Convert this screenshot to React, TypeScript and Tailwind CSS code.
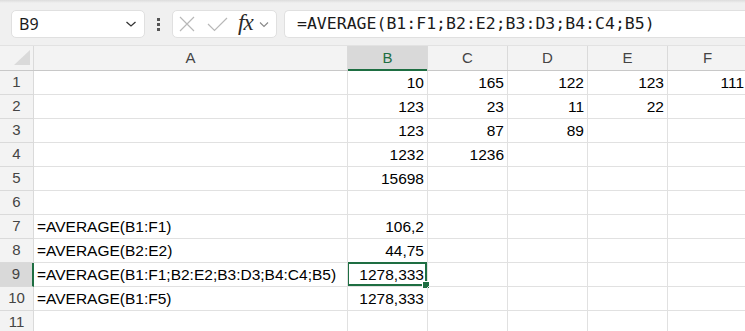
import React from "react";

const cols = ["A", "B", "C", "D", "E", "F"];
const colW = ["w-[314px]", "w-[80px]", "w-[80px]", "w-[80px]", "w-[80px]", "w-[80px]"];

const data: Record<number, string[]> = {
  1: ["", "10", "165", "122", "123", "111"],
  2: ["", "123", "23", "11", "22", ""],
  3: ["", "123", "87", "89", "", ""],
  4: ["", "1232", "1236", "", "", ""],
  5: ["", "15698", "", "", "", ""],
  6: ["", "", "", "", "", ""],
  7: ["=AVERAGE(B1:F1)", "106,2", "", "", "", ""],
  8: ["=AVERAGE(B2:E2)", "44,75", "", "", "", ""],
  9: ["=AVERAGE(B1:F1;B2:E2;B3:D3;B4:C4;B5)", "1278,333", "", "", "", ""],
  10: ["=AVERAGE(B1:F5)", "1278,333", "", "", "", ""],
  11: ["", "", "", "", "", ""],
};

export default function App() {
  const rows = [1, 2, 3, 4, 5, 6, 7, 8, 9, 10, 11];
  return (
    <div
      className="w-[745px] h-[331px] overflow-hidden bg-white relative"
      style={{ fontFamily: '"Liberation Sans", Arial, sans-serif' }}
    >
      {/* Toolbar */}
      <div className="h-[46px] bg-[#f0f0f0] relative border-b border-[#e2e2e2]">
        <div className="absolute top-0 left-0 right-0 h-[3px] bg-gradient-to-b from-[#dcdcdc] to-[#f0f0f0]" />
        <div className="flex items-center pt-[10px] pl-[11px] gap-0">
          {/* Name box */}
          <div className="w-[134px] h-[28px] bg-white rounded-[5px] border border-[#e0e0e0] flex items-center justify-between pl-[7px] pr-[7px]">
            <span className="text-[16px] text-[#1a1a1a]" style={{ fontFamily: '"Noto Sans", "Liberation Sans", sans-serif' }}>B9</span>
            <svg width="12" height="8" viewBox="0 0 12 8">
              <path d="M1.5 2 L6 6 L10.5 2" fill="none" stroke="#333" strokeWidth="1.3" />
            </svg>
          </div>
          {/* dots */}
          <div className="w-[27px] flex flex-col items-center gap-[2px]">
            <div className="w-[3px] h-[3px] bg-[#555]" />
            <div className="w-[3px] h-[3px] bg-[#555]" />
            <div className="w-[3px] h-[3px] bg-[#555]" />
          </div>
          {/* formula buttons */}
          <div className="w-[105px] h-[28px] bg-white rounded-[5px] border border-[#e0e0e0] flex items-center pl-[6px]">
            <svg width="16" height="16" viewBox="0 0 16 16">
              <path d="M1 1 L15 15 M15 1 L1 15" stroke="#b8b8b8" strokeWidth="1.2" fill="none" />
            </svg>
            <svg width="21" height="16" viewBox="0 0 21 16" className="ml-[12px]">
              <path d="M1 8 L7.5 14.5 L20 2" stroke="#b8b8b8" strokeWidth="1.2" fill="none" />
            </svg>
            <span
              className="ml-[10px] text-[23px] italic text-[#2a2a2a] leading-none -mt-[3px] tracking-[-1px]"
              style={{ fontFamily: '"Liberation Serif", "Times New Roman", serif' }}
            >
              fx
            </span>
            <svg width="10" height="7" viewBox="0 0 10 7" className="ml-[6px] mt-[1px]">
              <path d="M1 1.5 L5 5.5 L9 1.5" fill="none" stroke="#888" strokeWidth="1.1" />
            </svg>
          </div>
          {/* formula bar */}
          <div className="ml-[7px] flex-1 h-[28px] bg-white rounded-l-[5px] border border-r-0 border-[#e0e0e0] flex items-center pl-[12px] -mr-[10px]">
            <span
              className="text-[16.5px] text-[#1a1a1a] whitespace-nowrap"
              style={{ fontFamily: '"DejaVu Sans Mono", "Liberation Mono", monospace' }}
            >
              =AVERAGE(B1:F1;B2:E2;B3:D3;B4:C4;B5)
            </span>
          </div>
        </div>
      </div>

      {/* Column headers */}
      <div className="flex h-[25px] bg-[#f3f3f3] border-b border-[#c8c8c8] whitespace-nowrap">
        <div className="w-[34px] shrink-0 border-r border-[#dadada] relative">
          <svg width="17" height="16" viewBox="0 0 17 16" className="absolute left-[14px] top-[4px]">
            <polygon points="16,0 16,15 0,15" fill="#dadada" />
          </svg>
        </div>
        {cols.map((c, i) => (
          <div
            key={c}
            className={`${colW[i]} shrink-0 border-r border-[#dadada] flex items-center justify-center text-[15px] relative ${
              c === "B" ? "bg-[#d9d9d9] text-[#1e6e42]" : "text-[#444]"
            }`}
          >
            {c}
            {c === "B" && <div className="absolute left-0 right-0 bottom-[-1px] h-[2px] bg-[#1e6e42]" />}
          </div>
        ))}
      </div>

      {/* Rows */}
      {rows.map((r) => (
        <div key={r} className="flex h-[24px] whitespace-nowrap">
          <div
            className={`w-[34px] shrink-0 border-b border-r flex items-center justify-center text-[15px] text-[#444] relative ${
              r === 9 ? "bg-[#d9d9d9] border-b-[#dadada] border-r-[#1e6e42] border-r-2" : "bg-[#f3f3f3] border-[#dadada]"
            }`}
          >
            {r}
          </div>
          {data[r].map((v, i) => (
            <div
              key={i}
              className={`${colW[i]} shrink-0 border-b border-r border-[#e1e1e1] flex items-center text-[15.5px] text-black relative pt-[1px] ${
                i === 0 ? "justify-start pl-[3px] overflow-visible z-10" : "justify-end pr-[3px]"
              }`}
            >
              {v}
              {r === 9 && i === 1 && (
                <>
                  <div className="absolute -left-[1px] -top-[1px] -right-[0px] -bottom-[0px] border-2 border-[#1e6e42] pointer-events-none" />
                  <div className="absolute -right-[3px] -bottom-[3px] w-[6px] h-[6px] bg-[#1e6e42] border border-white box-content" />
                </>
              )}
            </div>
          ))}
        </div>
      ))}
    </div>
  );
}
